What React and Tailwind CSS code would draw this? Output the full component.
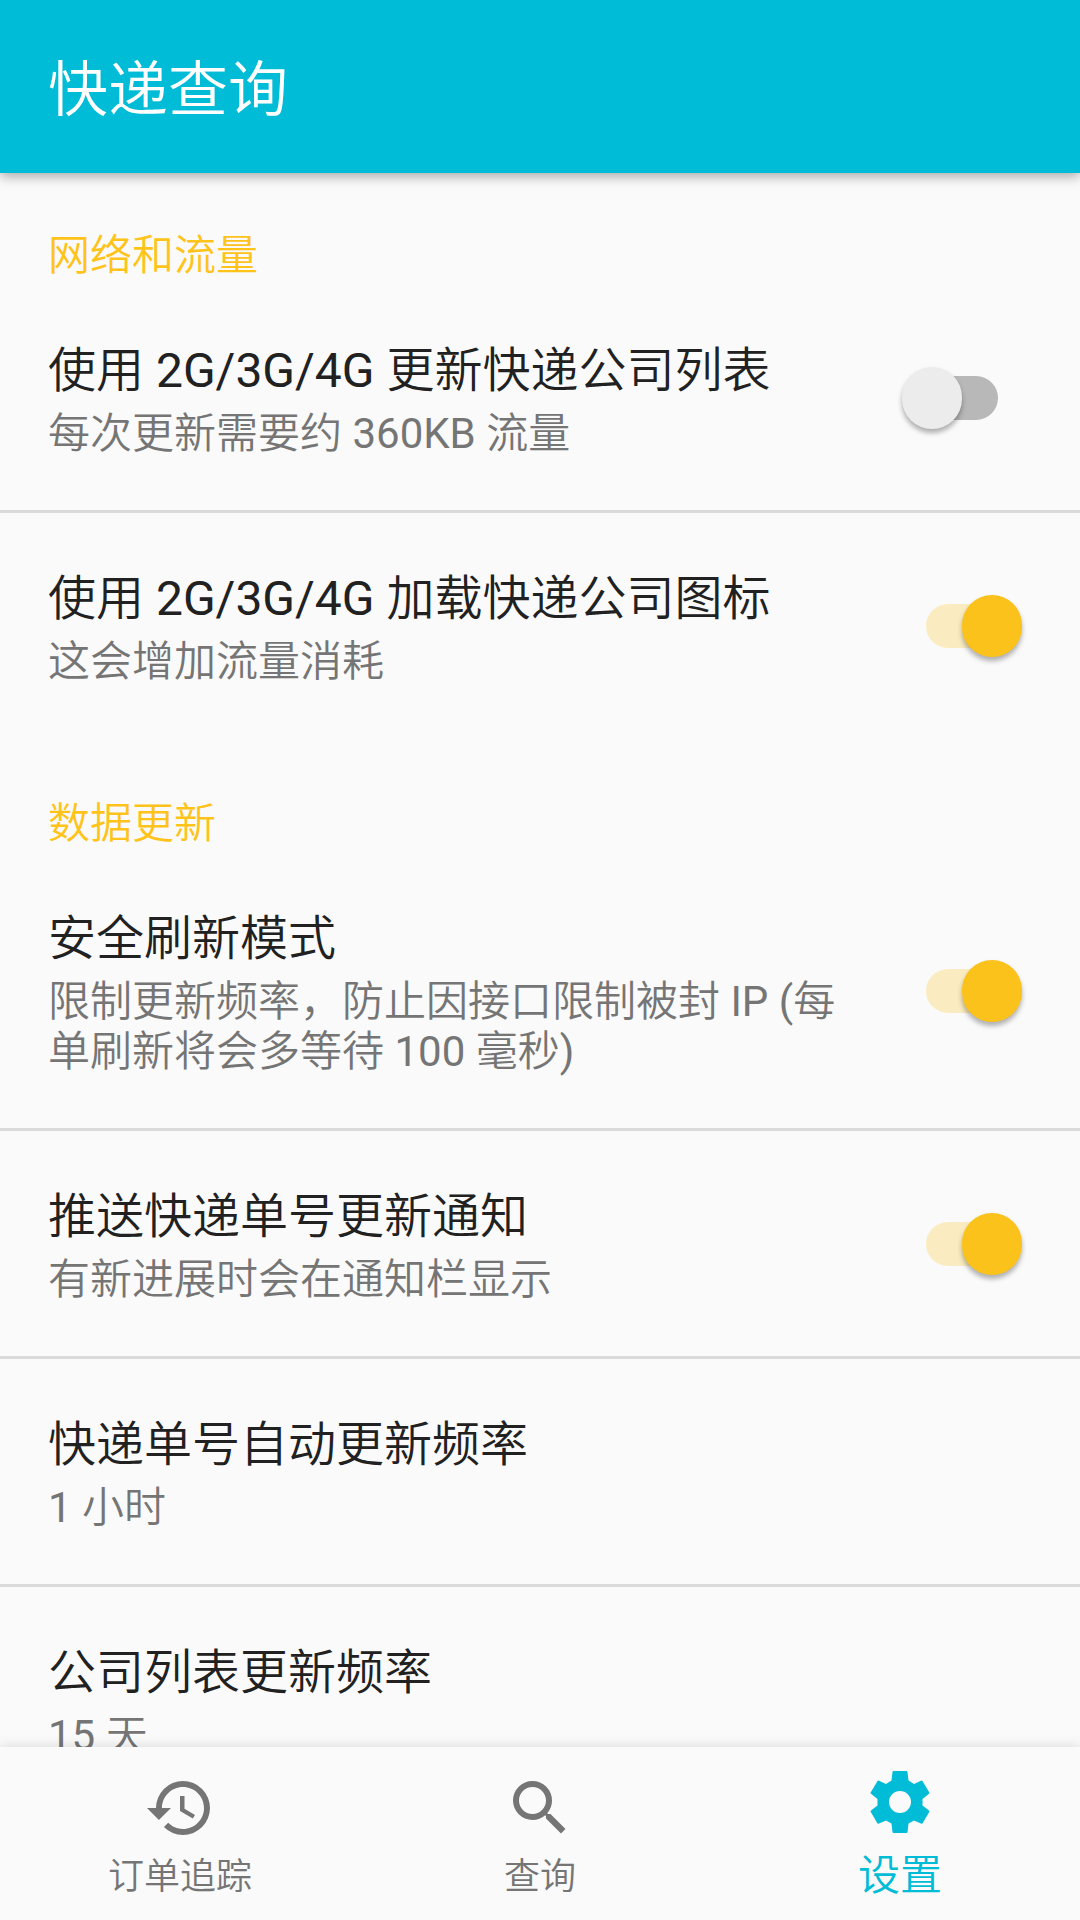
import React, { useState } from "react";
import { MdHistory, MdSearch } from "react-icons/md";

const SECTIONS = [
  {
    title: "网络和流量",
    items: [
      {
        id: "mobile-update",
        title: "使用 2G/3G/4G 更新快递公司列表",
        summary: "每次更新需要约 360KB 流量",
        toggle: true,
        value: false,
      },
      {
        id: "mobile-icons",
        title: "使用 2G/3G/4G 加载快递公司图标",
        summary: "这会增加流量消耗",
        toggle: true,
        value: true,
      },
    ],
  },
  {
    title: "数据更新",
    items: [
      {
        id: "safe-refresh",
        title: "安全刷新模式",
        summary: "限制更新频率，防止因接口限制被封 IP (每单刷新将会多等待 100 毫秒)",
        toggle: true,
        value: true,
      },
      {
        id: "push",
        title: "推送快递单号更新通知",
        summary: "有新进展时会在通知栏显示",
        toggle: true,
        value: true,
      },
      { id: "package-interval", title: "快递单号自动更新频率", summary: "1 小时" },
      { id: "company-interval", title: "公司列表更新频率", summary: "15 天" },
    ],
  },
];

const TABS = [
  { id: "orders", label: "订单追踪", icon: MdHistory },
  { id: "query", label: "查询", icon: MdSearch },
  { id: "settings", label: "设置", icon: GearIcon },
];

export default function App() {
  const [tab, setTab] = useState("settings");

  return (
    <div className="h-screen flex flex-col bg-[#fafafa] text-[#212121] font-['Roboto','Noto_Sans_CJK_SC_DemiLight','Noto_Sans_CJK_SC',sans-serif]">
      {/* App bar */}
      <header className="relative z-10 shrink-0 h-[173px] flex items-center px-12 pt-2 bg-[#00bcd7] shadow-[0_3px_12px_rgba(0,0,0,0.35)]">
        <h1 className="text-[60px] leading-[72px] font-[350] text-white">快递查询</h1>
      </header>

      {/* Preference list */}
      <main className="flex-1 min-h-0 overflow-y-auto [scrollbar-width:none]">
        {SECTIONS.map((section) => (
          <section key={section.title}>
            <h2 className="h-28 pt-[58px] px-12 text-[42px] leading-[50px] text-[#ffc31a]">{section.title}</h2>
            {section.items.map((item) => (
              <Preference key={item.id} item={item} />
            ))}
          </section>
        ))}
      </main>

      {/* Bottom navigation */}
      <nav className="relative z-10 shrink-0 h-[173px] grid grid-cols-3 bg-[#fafafa] shadow-[0_0_12px_rgba(0,0,0,0.15)]">
        {TABS.map(({ id, label, icon: Icon }) => (
          <button
            key={id}
            type="button"
            onClick={() => setTab(id)}
            className={`flex flex-col items-center ${
              tab === id ? "pt-5 gap-1 text-[42px] text-[#00bcd7]" : "pt-[25px] text-[36px] text-[#757575]"
            }`}
          >
            <Icon className="size-[72px]" />
            <span className="leading-[66px]">{label}</span>
          </button>
        ))}
      </nav>
    </div>
  );
}

// Helper Components

function Preference({ item }) {
  const text = (
    <>
      <span className="block text-[48px] leading-[56px]">{item.title}</span>
      <span className="block mt-[10px] text-[42px] leading-[50px] text-[#757575]">{item.summary}</span>
    </>
  );

  if (!item.toggle) {
    return (
      <button
        type="button"
        className="block w-full px-12 pt-[58px] pb-[51px] text-left border-b-3 border-[#dadada] last:border-transparent"
      >
        {text}
      </button>
    );
  }

  return (
    <div className="flex items-center justify-between gap-16 pl-12 pr-[58px] border-b-3 border-[#dadada] last:border-transparent">
      <label htmlFor={item.id} className="flex-1 pt-[58px] pb-[51px]">
        {text}
      </label>
      <Switch id={item.id} defaultChecked={item.value} />
    </div>
  );
}

function Switch(props) {
  return (
    <input
      type="checkbox"
      role="switch"
      className="appearance-none relative shrink-0 w-[120px] h-[62px]
        before:absolute before:inset-x-6 before:inset-y-[9px] before:rounded-full before:bg-[#b8b8b8]
        checked:before:bg-[#faecc0]
        after:absolute after:left-0 after:top-0 after:w-[60px] after:h-[62px] after:rounded-full after:bg-[#ececec]
        after:shadow-[0_4px_5px_rgba(0,0,0,0.3)]
        checked:after:left-[60px] checked:after:bg-[#fbc21c]"
      {...props}
    />
  );
}

function GearIcon({ className }) {
  return (
    <svg viewBox="0 0 72 72" fill="currentColor" className={className}>
      <path
        fillRule="evenodd"
        d="M29.5 4H42.5Q43.4 4 43.5 5L44.5 13.5L50 17L57 13.7Q58 13.3 58.6 14.2L65.2 25.3Q65.7 26.2 65 26.8L58.5 32V38.5L65 43.4Q65.7 44 65.2 44.9L58.6 56.2Q58 57 57 56.6L50 53.5L44.5 56.5L43.5 65Q43.4 66 42.5 66H29.5Q28.6 66 28.5 65L27.5 56.5L22 53.5L15 56.6Q14 57 13.4 56.2L6.8 44.9Q6.3 44 7 43.4L13.5 38.5V32L7 26.8Q6.3 26.2 6.8 25.3L13.4 14.2Q14 13.3 15 13.7L22 17L27.5 13.5L28.5 5Q28.6 4 29.5 4ZM36 24A11 11 0 1 0 36 46A11 11 0 1 0 36 24Z"
      />
    </svg>
  );
}
